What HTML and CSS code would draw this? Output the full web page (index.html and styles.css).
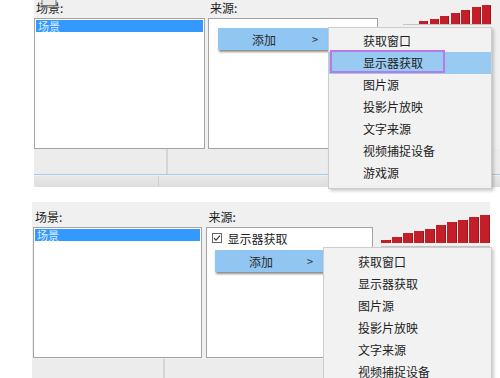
FILE: index.html
```html
<!DOCTYPE html>
<html lang="zh-CN">
<head>
    <meta charset="UTF-8">
    <meta name="viewport" content="width=device-width, initial-scale=1.0">
    <title>场景与来源 - 添加来源</title>
    <link rel="stylesheet" href="styles.css">
</head>
<body>
    <!-- 第一张截图：选择“显示器获取” -->
    <div class="shot shot-top">
        <div class="panel">
            <div class="col scenes">
                <div class="label">场景:</div>
                <div class="list">
                    <div class="sel">场景</div>
                </div>
            </div>
            <div class="col sources">
                <div class="label">来源:</div>
                <div class="list"></div>
            </div>
            <div class="meter">
                <span style="height:3px"></span>
                <span style="height:5px"></span>
                <span style="height:8px"></span>
                <span style="height:11px"></span>
                <span style="height:14px"></span>
                <span style="height:17px"></span>
                <span style="height:19px"></span>
            </div>
        </div>
        <div class="foot">
            <div class="cell"></div>
            <div class="cell"></div>
        </div>
        <div class="strip">
            <div class="cell"></div>
            <div class="cell"></div>
        </div>

        <svg class="glitch" width="30" height="9" viewBox="0 0 30 9">
            <rect x="6" y="0.5" width="14" height="6" fill="#e8e8e8" stroke="#777" stroke-width="1"/>
            <path d="M3 8h20" stroke="#888" stroke-width="1"/>
        </svg>

        <div class="menu-add">
            <span>添加</span>
            <span class="arrow">&gt;</span>
        </div>
        <ul class="submenu">
            <li>获取窗口</li>
            <li class="hover">显示器获取<span class="mark"></span></li>
            <li>图片源</li>
            <li>投影片放映</li>
            <li>文字来源</li>
            <li>视频捕捉设备</li>
            <li>游戏源</li>
        </ul>
    </div>

    <!-- 第二张截图：已添加“显示器获取” -->
    <div class="shot shot-bottom">
        <div class="panel">
            <div class="col scenes">
                <div class="label">场景:</div>
                <div class="list">
                    <div class="sel">场景</div>
                </div>
            </div>
            <div class="col sources">
                <div class="label">来源:</div>
                <div class="list">
                    <div class="check-row">
                        <span class="box">
                            <svg width="8" height="8" viewBox="0 0 8 8">
                                <path d="M1 4.2l2 2 4-4.6" fill="none" stroke="#333" stroke-width="1.1"/>
                            </svg>
                        </span>
                        显示器获取
                    </div>
                </div>
            </div>
            <div class="meter">
                <span style="height:3px"></span>
                <span style="height:6px"></span>
                <span style="height:10px"></span>
                <span style="height:12px"></span>
                <span style="height:14px"></span>
                <span style="height:18px"></span>
                <span style="height:21px"></span>
                <span style="height:23px"></span>
                <span style="height:26px"></span>
                <span style="height:28px"></span>
            </div>
        </div>
        <div class="foot">
            <div class="cell"></div>
            <div class="cell"></div>
        </div>

        <div class="menu-add">
            <span>添加</span>
            <span class="arrow">&gt;</span>
        </div>
        <ul class="submenu">
            <li>获取窗口</li>
            <li>显示器获取</li>
            <li>图片源</li>
            <li>投影片放映</li>
            <li>文字来源</li>
            <li>视频捕捉设备</li>
        </ul>
    </div>
</body>
</html>
```

FILE: styles.css
```css
body {
    margin: 0;
    width: 500px;
    height: 378px;
    overflow: hidden;
    background-color: #fff;
    font-family: "Noto Sans CJK SC", "Noto Sans", sans-serif;
    font-size: 12px;
    color: #1e1e1e;
}
.shot {
    position: relative;
    background-color: #f0f0f0;
}
.shot-top {
    margin-left: 34px;
    height: 186px;
}
.shot-bottom {
    margin-left: 32px;
    margin-top: 16px;
    width: 458px;
    height: 176px;
}
.panel {
    display: flex;
}
.shot-top .panel {
    gap: 3px;
}
.shot-bottom .panel {
    gap: 4px;
    padding-left: 1px;
}
.shot-top .scenes {
    width: 171px;
}
.shot-top .sources {
    width: 170px;
}
.shot-bottom .scenes {
    width: 170px;
}
.shot-bottom .sources {
    width: 169px;
}
.label {
    height: 18px;
    line-height: 16px;
    padding-left: 2px;
    box-sizing: border-box;
}
.shot-bottom .label {
    height: 25px;
    padding-top: 7px;
}
.shot-bottom .sources .label {
    padding-left: 3px;
}
.list {
    height: 131px;
    background-color: #fff;
    border: 1px solid #a3a3a3;
    box-sizing: border-box;
}
.sel {
    margin: 1px;
    height: 12px;
    line-height: 12px;
    padding-left: 2px;
    font-size: 11px;
    background-color: #3399ff;
    color: #d9ecff;
}
.check-row {
    display: flex;
    align-items: center;
    gap: 6px;
    height: 16px;
    margin-top: 2px;
    padding-left: 5px;
    font-size: 12px;
    color: #222;
}
.box {
    display: flex;
    align-items: center;
    justify-content: center;
    width: 10px;
    height: 10px;
    border: 1px solid #666;
    box-sizing: border-box;
    background-color: #fff;
}

/* 音量条 */
.meter {
    display: flex;
    align-items: flex-end;
    box-sizing: content-box;
    border-bottom: 1px solid #c4c4c4;
}
.meter span {
    display: block;
    background-color: #c41f29;
    box-shadow: inset -1px 0 0 #9e1219;
}
.shot-top .meter {
    margin-left: 22px;
    padding-left: 16px;
    height: 24px;
    gap: 1.5px;
}
.shot-top .meter span {
    width: 9px;
}
.shot-bottom .meter {
    margin-left: 4px;
    margin-top: 13px;
    height: 28px;
    padding-bottom: 3px;
    gap: 1px;
    align-self: flex-start;
}
.shot-bottom .meter span {
    width: 10px;
}

/* 底部按钮栏 */
.foot {
    display: flex;
    height: 26px;
    background-color: #ececec;
    border-bottom: 1px solid #a6cbe6;
    box-sizing: border-box;
}
.foot .cell {
    border-right: 1px solid #d4d4d4;
}
.shot-top .foot .cell:first-child {
    width: 132px;
}
.shot-bottom .foot {
    height: 19px;
    margin-top: 1px;
    border-bottom: none;
}
.shot-bottom .foot .cell:first-child {
    width: 131px;
}
.strip {
    display: flex;
    height: 11px;
    margin-top: 1px;
    background: linear-gradient(#e8e8e8, #dedede);
}
.strip .cell:first-child {
    width: 124px;
    border-right: 1px solid #cfcfcf;
}
.glitch {
    position: absolute;
    left: 2px;
    top: -1px;
}

/* 右键菜单 */
.menu-add {
    position: absolute;
    display: flex;
    align-items: center;
    height: 22px;
    padding-left: 34px;
    padding-right: 10px;
    box-sizing: border-box;
    background-color: #91c6f2;
    box-shadow: 1px 2px 2px rgba(0, 0, 0, 0.45);
    color: #2a2a2a;
}
.menu-add .arrow {
    margin-left: auto;
    font-size: 11px;
}
.shot-top .menu-add {
    left: 184px;
    top: 28px;
    width: 110px;
}
.shot-bottom .menu-add {
    left: 183px;
    top: 48px;
    width: 108px;
}
.submenu {
    position: absolute;
    list-style-type: none;
    margin: 0;
    padding: 2px 0 4px;
    background-color: #f2f2f2;
    border: 1px solid #cdcdcd;
    box-shadow: 2px 2px 3px rgba(0, 0, 0, 0.2);
}
.submenu li {
    position: relative;
    height: 22px;
    line-height: 22px;
    padding-left: 34px;
    color: #222;
}
.submenu li.hover {
    background-color: #99caf1;
}
.submenu .mark {
    position: absolute;
    left: 1px;
    top: -2px;
    width: 115px;
    height: 23px;
    border: 2px solid #b87be4;
    box-sizing: border-box;
}
.shot-top .submenu {
    left: 294px;
    top: 27px;
    width: 162px;
}
.shot-bottom .submenu {
    left: 291px;
    top: 45px;
    width: 167px;
    padding-top: 3px;
}
```
